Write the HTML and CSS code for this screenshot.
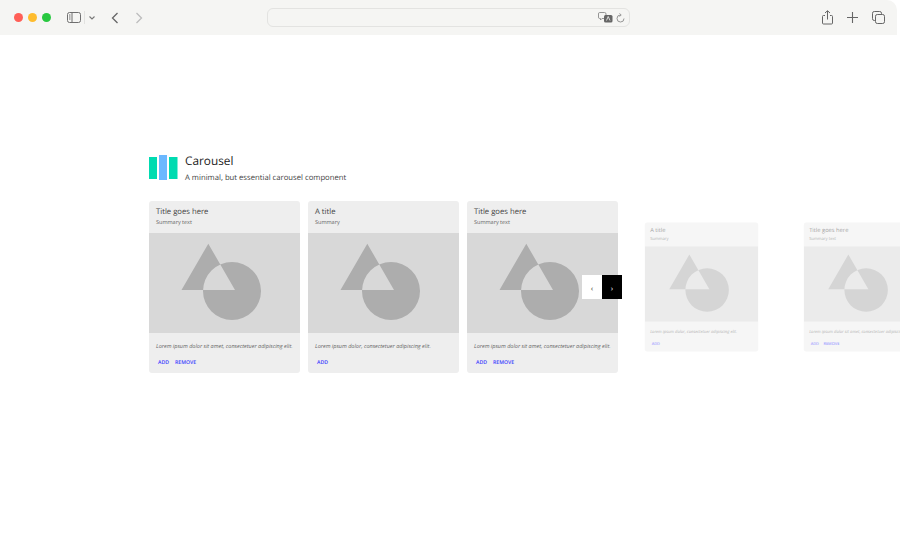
FILE: index.html
```html
<!DOCTYPE html>
<html lang="en">
<head>
    <meta charset="UTF-8">
    <meta name="viewport" content="width=device-width, initial-scale=1.0">
    <link rel="stylesheet" href="styles.css">
    <title>Carousel</title>
</head>
<body>
    <!-- shapes placeholder used by every card -->
    <svg class="defs" width="0" height="0">
        <symbol id="shapes" viewBox="0 0 81 78">
            <path fill-rule="evenodd" d="M0.5 47L27.300 0.700L54 47Z M22 48A29 29 0 1 0 80 48A29 29 0 1 0 22 48Z"/>
        </symbol>
    </svg>

    <!-- browser chrome -->
    <div class="toolbar">
        <div class="traffic">
            <span class="dot red"></span>
            <span class="dot yellow"></span>
            <span class="dot green"></span>
        </div>
        <svg class="tool-sidebar" width="14" height="11" viewBox="0 0 14 11" fill="none" stroke="#6f6f6f" stroke-width="1">
            <rect x="0.5" y="0.5" width="13" height="10" rx="2"/>
            <path d="M5 0.5V10.5M2 3H3.500M2 5H3.500M2 7H3.500"/>
        </svg>
        <span class="tool-divider"></span>
        <svg class="tool-chevron" width="6" height="4" viewBox="0 0 6 4" fill="none" stroke="#777" stroke-width="1.1">
            <path d="M0.5 0.5L3 3L5.500 0.5"/>
        </svg>
        <svg class="tool-back" width="8" height="12" viewBox="0 0 8 12" fill="none" stroke="#666" stroke-width="1.3">
            <path d="M6.500 1L1.500 6L6.500 11"/>
        </svg>
        <svg class="tool-forward" width="8" height="12" viewBox="0 0 8 12" fill="none" stroke="#bdbdbd" stroke-width="1.3">
            <path d="M1.500 1L6.500 6L1.500 11"/>
        </svg>

        <div class="address">
            <svg width="15" height="11" viewBox="0 0 15 11">
                <path d="M1.500 0.5H6.500Q8 0.5 8 2V5Q8 6.500 6.500 6.500H4L2.500 8V6.500H1.500Q0.5 6.500 0.5 5V2Q0.5 0.5 1.500 0.5Z" fill="none" stroke="#8a8a8a" stroke-width="0.9"/>
                <rect x="6" y="3" width="8.500" height="7.500" rx="1.500" fill="#666"/>
                <path d="M8.500 8.500L10.200 4.500L12 8.500" fill="none" stroke="#f5f5f3" stroke-width="0.8"/>
            </svg>
            <svg width="9" height="10" viewBox="0 0 9 10" fill="none" stroke="#8a8a8a" stroke-width="0.9">
                <path d="M4.500 2A3.500 3.500 0 1 0 8 5.500"/>
                <path d="M3.600 0.4L5.200 2L3.600 3.600"/>
            </svg>
        </div>

        <div class="tool-right">
            <svg width="11" height="15" viewBox="0 0 11 15" fill="none" stroke="#666" stroke-width="1">
                <path d="M3 5.500H1.500Q0.5 5.500 0.5 6.500V13Q0.5 14 1.500 14H9.500Q10.500 14 10.500 13V6.500Q10.500 5.500 9.500 5.500H8"/>
                <path d="M5.500 9.500V1M3 3L5.500 0.7L8 3"/>
            </svg>
            <svg width="11" height="11" viewBox="0 0 11 11" fill="none" stroke="#666" stroke-width="1.1">
                <path d="M5.500 0V11M0 5.500H11"/>
            </svg>
            <svg width="13" height="13" viewBox="0 0 13 13" fill="none" stroke="#666" stroke-width="1">
                <rect x="3.500" y="3.500" width="9" height="9" rx="1.800"/>
                <path d="M3.500 9.500H2.300Q0.5 9.500 0.5 7.700V2.300Q0.5 0.5 2.300 0.5H7.700Q9.500 0.5 9.500 2.300V3.500"/>
            </svg>
        </div>
    </div>

    <div class="page">
        <div class="intro">
            <svg class="logo" width="29" height="25" viewBox="0 0 29 25">
                <rect x="0" y="2" width="8" height="22" fill="#00dbb1"/>
                <rect x="10" y="0" width="8" height="25" fill="#6cb8ff"/>
                <rect x="20" y="2" width="8.500" height="22" fill="#00dbb1"/>
            </svg>
            <div>
                <h1>Carousel</h1>
                <p>A minimal, but essential carousel component</p>
            </div>
        </div>

        <div class="carousel">
            <div class="card">
                <div class="card-head">
                    <h2>Title goes here</h2>
                    <h3>Summary text</h3>
                </div>
                <div class="card-image">
                    <svg width="81" height="78"><use href="#shapes"/></svg>
                </div>
                <div class="card-foot">
                    <p>Lorem ipsum dolor sit amet, consectetuer adipiscing elit.</p>
                    <div class="actions"><a>ADD</a><a>REMOVE</a></div>
                </div>
            </div>

            <div class="card">
                <div class="card-head">
                    <h2>A title</h2>
                    <h3>Summary</h3>
                </div>
                <div class="card-image">
                    <svg width="81" height="78"><use href="#shapes"/></svg>
                </div>
                <div class="card-foot">
                    <p>Lorem ipsum dolor, consectetuer adipiscing elit.</p>
                    <div class="actions"><a>ADD</a></div>
                </div>
            </div>

            <div class="card">
                <div class="card-head">
                    <h2>Title goes here</h2>
                    <h3>Summary text</h3>
                </div>
                <div class="card-image">
                    <svg width="81" height="78"><use href="#shapes"/></svg>
                </div>
                <div class="card-foot">
                    <p>Lorem ipsum dolor sit amet, consectetuer adipiscing elit.</p>
                    <div class="actions"><a>ADD</a><a>REMOVE</a></div>
                </div>
            </div>

            <div class="card faded">
                <div class="card-head">
                    <h2>A title</h2>
                    <h3>Summary</h3>
                </div>
                <div class="card-image">
                    <svg width="81" height="78"><use href="#shapes"/></svg>
                </div>
                <div class="card-foot">
                    <p>Lorem ipsum dolor, consectetuer adipiscing elit.</p>
                    <div class="actions"><a>ADD</a></div>
                </div>
            </div>

            <div class="card faded">
                <div class="card-head">
                    <h2>Title goes here</h2>
                    <h3>Summary text</h3>
                </div>
                <div class="card-image">
                    <svg width="81" height="78"><use href="#shapes"/></svg>
                </div>
                <div class="card-foot">
                    <p>Lorem ipsum dolor sit amet, consectetuer adipiscing elit.</p>
                    <div class="actions"><a>ADD</a><a>REMOVE</a></div>
                </div>
            </div>

            <div class="carousel-nav">
                <button class="prev">‹</button>
                <button class="next">›</button>
            </div>
        </div>
    </div>
</body>
</html>
```

FILE: styles.css
```css
/* Basic reset */
* {
    margin: 0;
    padding: 0;
    box-sizing: border-box;
}

html, body {
    height: 100%;
    overflow: hidden;
}

body {
    background-color: #fff;
    font-family: "Open Sans", Arial, sans-serif;
    text-rendering: geometricPrecision;
}

.defs {
    display: block;
}

/* Browser toolbar */
.toolbar {
    display: flex;
    align-items: center;
    width: 897px;
    height: 35px;
    background-color: #f5f5f3;
    border-top-right-radius: 10px;
    padding-left: 14px;
}
.traffic {
    display: flex;
    gap: 5px;
}
.dot {
    width: 9px;
    height: 9px;
    border-radius: 50%;
}
.red { background-color: #ff5f57; }
.yellow { background-color: #febc2e; }
.green { background-color: #28c840; }

.tool-sidebar { margin-left: 16px; }
.tool-divider {
    width: 1px;
    height: 13px;
    background-color: #e2e2e0;
    margin-left: 3px;
}
.tool-chevron { margin-left: 4px; }
.tool-back { margin-left: 16px; }
.tool-forward { margin-left: 16px; }

.address {
    display: flex;
    align-items: center;
    justify-content: flex-end;
    gap: 3px;
    width: 363px;
    height: 19px;
    margin-left: 124px;
    padding-right: 4px;
    background-color: #f5f5f3;
    border: 1px solid #e3e3e1;
    border-radius: 6px;
}

.tool-right {
    display: flex;
    align-items: center;
    gap: 14px;
    margin-left: 192px;
}

/* Page */
.page {
    padding: 120px 0 0 149px;
}
.intro {
    display: flex;
    align-items: flex-start;
    gap: 7px;
}
.intro h1 {
    font-size: 11.800px;
    font-weight: 400;
    line-height: 14px;
    margin-top: -1px;
    color: #222;
}
.intro p {
    font-size: 7.700px;
    line-height: 12px;
    margin-top: 4px;
    color: #444;
}

/* Carousel */
.carousel {
    position: relative;
    display: flex;
    gap: 8px;
    width: 900px;
    margin-top: 17px;
}
.card {
    flex: 0 0 151px;
    height: 172px;
    background-color: #eeeeee;
    border-radius: 3px;
    overflow: hidden;
}
.card.faded {
    transform: scale(0.75);
    opacity: 0.5;
}
.card-head {
    height: 32px;
    padding: 6px 7px 0;
}
.card-head h2 {
    font-size: 7.700px;
    font-weight: 400;
    line-height: 11px;
    color: #444;
}
.card-head h3 {
    font-size: 5.500px;
    font-weight: 400;
    line-height: 8px;
    color: #666;
}
.card-image {
    height: 100px;
    padding: 10px 0 0 32px;
    background-color: #d8d8d8;
    fill: #adadad;
}
.card-foot {
    padding: 9px 7px 0;
}
.card-foot p {
    font-size: 5.500px;
    font-style: italic;
    line-height: 8px;
    color: #666;
}
.actions {
    display: flex;
    gap: 6px;
    margin-top: 8px;
    padding-left: 2px;
}
.actions a {
    font-size: 5.200px;
    font-weight: 600;
    line-height: 8px;
    color: #3c3cff;
}

.carousel-nav {
    position: absolute;
    top: 74px;
    left: 433px;
    display: flex;
}
.carousel-nav button {
    width: 20px;
    height: 24px;
    border: none;
    font-family: inherit;
    font-size: 8px;
    cursor: pointer;
}
.prev {
    background-color: #fff;
    color: #333;
}
.next {
    background-color: #000;
    color: #fff;
}
```
